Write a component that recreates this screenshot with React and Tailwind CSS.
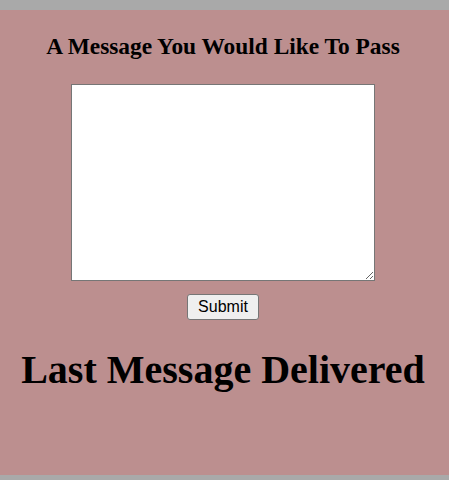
export default function App() {
  return (
    <div className="h-[480px] w-[449px] bg-[#a9a9a9] pt-[10px]">
      <div className="h-[465px] w-full bg-[#bc8f8f]">
        <div className="flex w-[446px] flex-col items-center">
          <h3
            className="mt-[23px] text-[23.4px] font-bold leading-[26px] text-black"
            style={{ fontFamily: '"Liberation Serif", serif' }}
          >
            A Message You Would Like To Pass
          </h3>
          <textarea className="mt-[25px] block h-[197px] w-[304px] resize border border-[#767676] bg-white" />
          <button
            className="mt-[13px] h-[26px] rounded-[3px] border border-[#767676] bg-[#efefef] px-[10px] text-[16px] leading-[18px] text-black"
            style={{ fontFamily: '"Liberation Sans", Arial, sans-serif' }}
          >
            Submit
          </button>
          <h1
            className="mt-[28px] text-[40px] font-bold leading-[44px] text-black"
            style={{ fontFamily: '"Liberation Serif", serif' }}
          >
            Last Message Delivered
          </h1>
        </div>
      </div>
    </div>
  );
}
